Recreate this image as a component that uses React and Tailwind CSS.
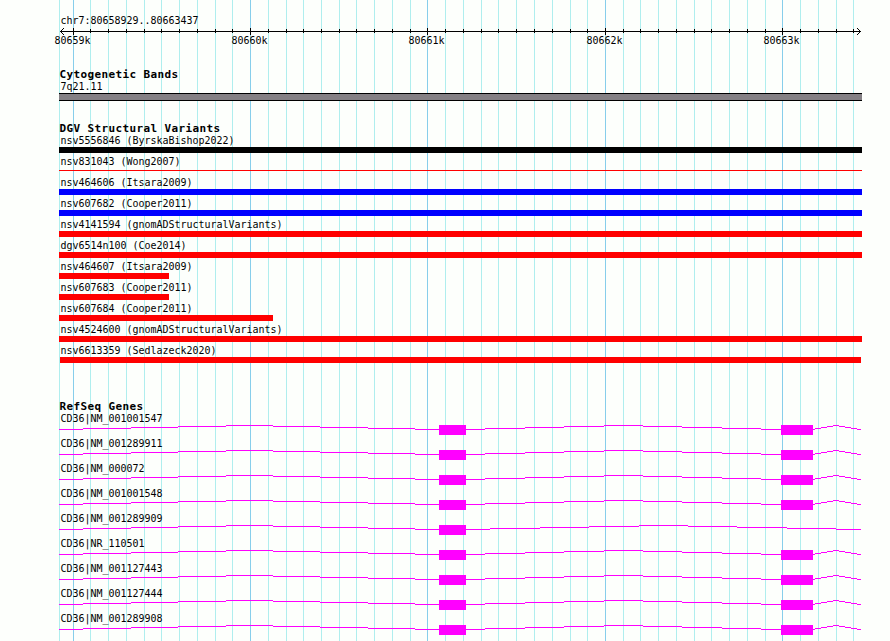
const MAJOR = [73, 250, 427, 605, 782]
const MINOR = [
  90, 108, 126, 144, 161, 179, 197, 215, 232, 268, 286, 303, 321, 339, 356, 374, 392, 410,
  445, 463, 481, 498, 516, 534, 552, 570, 587, 623, 640, 658, 676, 694, 711, 729, 747, 765,
  800, 818, 836, 853,
]

const AXIS_LABELS = [
  { label: '80659k', gap: 'ml-[54.5px]' },
  { label: '80660k', gap: 'ml-[141px]' },
  { label: '80661k', gap: 'ml-[141px]' },
  { label: '80662k', gap: 'ml-[142px]' },
  { label: '80663k', gap: 'ml-[141px]' },
]

const VARIANTS = [
  { name: 'nsv5556846 (ByrskaBishop2022)', bar: 'h-1.5 w-[803px] bg-black' },
  { name: 'nsv831043 (Wong2007)', bar: 'mt-0.5 h-px w-[803px] bg-[#ff0000]' },
  { name: 'nsv464606 (Itsara2009)', bar: 'h-1.5 w-[803px] bg-[#0000ff]' },
  { name: 'nsv607682 (Cooper2011)', bar: 'h-1.5 w-[803px] bg-[#0000ff]' },
  { name: 'nsv4141594 (gnomADStructuralVariants)', bar: 'h-1.5 w-[803px] bg-[#ff0000]' },
  { name: 'dgv6514n100 (Coe2014)', bar: 'h-1.5 w-[803px] bg-[#ff0000]' },
  { name: 'nsv464607 (Itsara2009)', bar: 'h-1.5 w-[110px] bg-[#ff0000]' },
  { name: 'nsv607683 (Cooper2011)', bar: 'h-1.5 w-[110px] bg-[#ff0000]' },
  { name: 'nsv607684 (Cooper2011)', bar: 'h-1.5 w-[214px] bg-[#ff0000]' },
  { name: 'nsv4524600 (gnomADStructuralVariants)', bar: 'h-1.5 w-[803px] bg-[#ff0000]' },
  { name: 'nsv6613359 (Sedlazeck2020)', bar: 'ml-px h-1.5 w-[801px] bg-[#ff0000]' },
]

// x breakpoints of each intron; the line rises one pixel per step to the middle, then falls
const INTRON_1 = [59, 83, 131, 178, 226, 273, 320, 368, 415, 439]
const INTRON_2 = [466, 485, 525, 564, 604, 643, 682, 722, 761, 781]
const INTRON_3 = [813, 815, 821, 827, 833, 839, 845, 851, 857, 861]
const INTRON_LONG = [466, 490, 540, 589, 639, 688, 737, 787, 836, 861]

const GENES = [
  { name: 'CD36|NM_001001547' },
  { name: 'CD36|NM_001289911' },
  { name: 'CD36|NM_000072' },
  { name: 'CD36|NM_001001548' },
  { name: 'CD36|NM_001289909', short: true },
  { name: 'CD36|NR_110501' },
  { name: 'CD36|NM_001127443' },
  { name: 'CD36|NM_001127444' },
  { name: 'CD36|NM_001289908' },
]

const intronPath = (xs) =>
  xs.slice(0, -1).map((x, i) => `M${x - 59} ${4.5 - Math.min(i, 8 - i)}H${xs[i + 1] - 59}`).join('')

function Gridlines() {
  return (
    <svg className="absolute inset-0 -z-10" width="890" height="641" shapeRendering="crispEdges">
      {[59, ...MINOR].map(x => <rect key={x} x={x} y="0" width="1" height="641" fill="#afeeee" />)}
      {MAJOR.map(x => <rect key={x} x={x} y="0" width="1" height="641" fill="#87ceeb" />)}
    </svg>
  )
}

function Ruler() {
  return (
    <svg className="block" width="890" height="7" shapeRendering="crispEdges">
      <rect x="60" y="3" width="801" height="1" />
      {MINOR.map(x => <rect key={x} x={x} y="1" width="1" height="4" />)}
      {MAJOR.map(x => <rect key={x} x={x} y="0" width="1" height="7" />)}
      <path d="M63.5 0v1M62.5 1v1M61.5 2v1M61.5 4v1M62.5 5v1M63.5 6v1M857.5 0v1M858.5 1v1M859.5 2v1M859.5 4v1M858.5 5v1M857.5 6v1" stroke="#000" />
    </svg>
  )
}

function Title({ children }) {
  return <h2 className="h-3 pl-[59.5px] text-[11px] leading-3 font-bold tracking-[0.38px]">{children}</h2>
}

function Gene({ gene }) {
  const introns = gene.short ? [INTRON_1, INTRON_LONG] : [INTRON_1, INTRON_2, INTRON_3]
  return (
    <div className="h-[25px]">
      <p className="h-3 pl-[60.5px] leading-3">{gene.name}</p>
      <svg className="ml-[59px] block" width="803" height="10" shapeRendering="crispEdges">
        <path d={introns.map(intronPath).join('')} stroke="#ff00ff" fill="none" />
        <rect x="380" y="0" width="27" height="10" fill="#ff00ff" />
        {!gene.short && <rect x="722" y="0" width="32" height="10" fill="#ff00ff" />}
      </svg>
    </div>
  )
}

export default function App() {
  return (
    <div className="relative isolate h-[641px] w-[890px] overflow-hidden bg-[#fdfffc] font-['DejaVu_Sans_Mono',monospace] text-[9.97px] whitespace-pre text-black">
      <Gridlines />

      <header className="h-[69px] pt-[15px]">
        <p className="mb-px h-3 pl-[60.5px] leading-3">chr7:80658929..80663437</p>
        <Ruler />
        <div className="flex h-3 leading-3">
          {AXIS_LABELS.map(a => <span key={a.label} className={`w-9 ${a.gap}`}>{a.label}</span>)}
        </div>
      </header>

      <section className="h-[54px]">
        <Title>Cytogenetic Bands</Title>
        <p className="h-3 pl-[60.5px] leading-3">7q21.11</p>
        <div className="ml-[59px] h-2 w-[803px] border-y border-black bg-[#848084]" />
      </section>

      <section className="h-[278px]">
        <Title>DGV Structural Variants</Title>
        {VARIANTS.map(v => (
          <div key={v.name} className="flex h-[21px] flex-col pl-[59px]">
            <p className="h-3 pl-[1.5px] leading-3">{v.name}</p>
            <div className={v.bar} />
          </div>
        ))}
      </section>

      <section>
        <Title>RefSeq Genes</Title>
        {GENES.map(g => <Gene key={g.name} gene={g} />)}
      </section>
    </div>
  )
}
